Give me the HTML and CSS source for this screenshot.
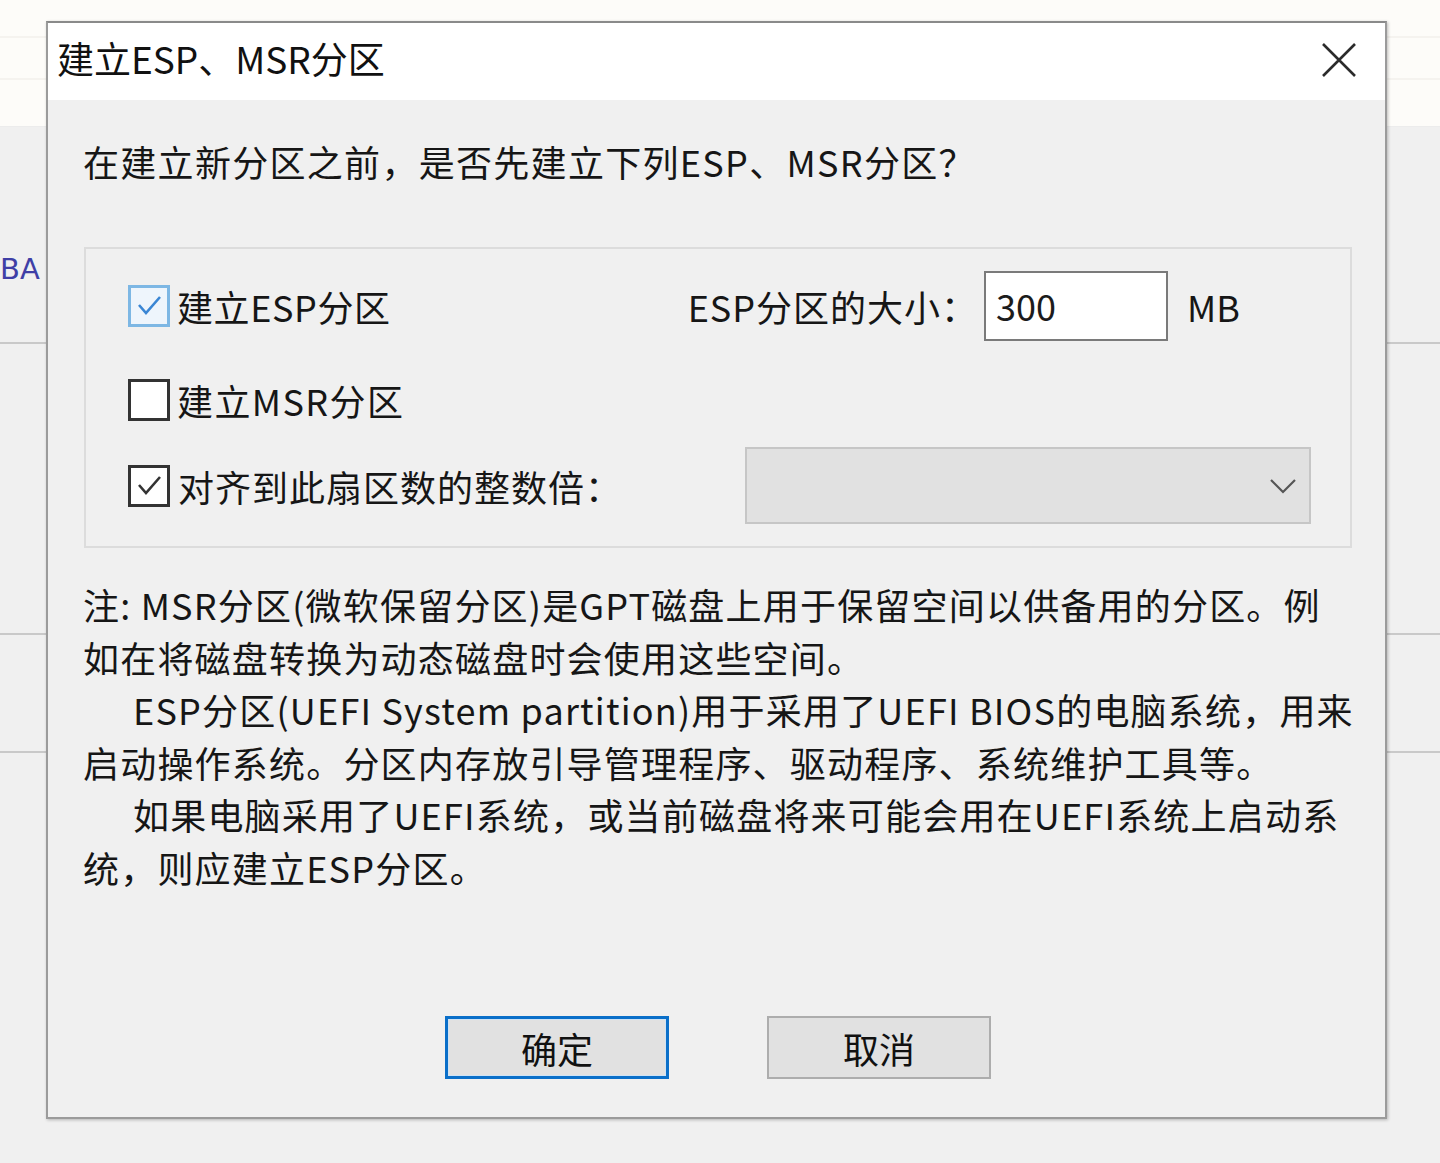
FILE: index.html
```html
<!DOCTYPE html>
<html lang="zh-CN">
<head>
<meta charset="utf-8">
<title>建立ESP、MSR分区</title>
<link rel="stylesheet" href="styles.css">
</head>
<body>
<div class="desktop">
  <div class="top-band"></div>
  <div class="bg-label">BA</div>

  <div class="dialog">
    <div class="titlebar">
      <span class="title">建立ESP、MSR分区</span>
      <span class="close">
        <svg width="36" height="36" viewBox="0 0 36 36"><path d="M2 2 L34 34 M34 2 L2 34" stroke="#2b2b2b" stroke-width="2.6" fill="none"/></svg>
      </span>
    </div>
    <div class="content">
      <p class="prompt">在建立新分区之前，是否先建立下列ESP、MSR分区？</p>

      <div class="group">
        <div class="row row1">
          <label class="check">
            <span class="box box-focus">
              <svg width="30" height="30" viewBox="0 0 30 30"><path d="M5 14 L12 22 L26 6" stroke="#3a86d4" stroke-width="2.6" fill="none"/></svg>
            </span>
            <span class="lbl">建立ESP分区</span>
          </label>
          <div class="size">
            <span class="size-lbl">ESP分区的大小：</span>
            <span class="input">300</span>
            <span class="unit">MB</span>
          </div>
        </div>
        <div class="row row2">
          <label class="check">
            <span class="box"></span>
            <span class="lbl lbl2">建立MSR分区</span>
          </label>
        </div>
        <div class="row row3">
          <label class="check">
            <span class="box">
              <svg width="30" height="30" viewBox="0 0 30 30"><path d="M5 14 L12 22 L26 6" stroke="#333" stroke-width="2.6" fill="none"/></svg>
            </span>
            <span class="lbl lbl3">对齐到此扇区数的整数倍：</span>
          </label>
          <div class="select">
            <svg width="28" height="16" viewBox="0 0 28 16"><path d="M2 2 L14 14 L26 2" stroke="#555" stroke-width="2.2" fill="none"/></svg>
          </div>
        </div>
      </div>

      <div class="note">
        <p>注: MSR分区(微软保留分区)是GPT磁盘上用于保留空间以供备用的分区。例<br>如在将磁盘转换为动态磁盘时会使用这些空间。</p>
        <p class="ind">ESP分区(UEFI System partition)用于采用了UEFI BIOS的电脑系统，用来<br>启动操作系统。分区内存放引导管理程序、驱动程序、系统维护工具等。</p>
        <p class="ind">如果电脑采用了UEFI系统，或当前磁盘将来可能会用在UEFI系统上启动系<br>统，则应建立ESP分区。</p>
      </div>

      <div class="buttons">
        <span class="btn btn-default">确定</span>
        <span class="btn">取消</span>
      </div>
    </div>
  </div>
</div>
</body>
</html>
```

FILE: styles.css
```css
* { box-sizing: border-box; }
html, body { margin: 0; padding: 0; }
body {
  width: 1440px;
  height: 1163px;
  overflow: hidden;
  font-family: "Noto Sans CJK SC", "Noto Sans", sans-serif;
  color: #161616;
}
.desktop {
  position: relative;
  width: 1440px;
  height: 1163px;
  background-color: #f0f0f0;
  background-image:
    linear-gradient(#c9c9c9, #c9c9c9),
    linear-gradient(#c9c9c9, #c9c9c9),
    linear-gradient(#c9c9c9, #c9c9c9);
  background-size: 100% 2px, 100% 2px, 100% 2px;
  background-position: 0 342px, 0 633px, 0 751px;
  background-repeat: no-repeat;
}
.top-band {
  height: 127px;
  background-color: #fdfcf9;
  background-image:
    repeating-linear-gradient(to bottom, transparent 0, transparent 36px, #f5f3ef 36px, #f5f3ef 38px, transparent 38px, transparent 78px, #f5f3ef 78px, #f5f3ef 80px, transparent 80px, transparent 127px);
  border-bottom: 1px solid #ececec;
}
.bg-label {
  position: absolute;
  left: 0;
  top: 252px;
  font-family: "DejaVu Sans", sans-serif;
  font-size: 29px;
  color: #3f3fa6;
}

.dialog {
  position: absolute;
  left: 46px;
  top: 21px;
  width: 1341px;
  height: 1098px;
  border: 2px solid #9b9b9b;
  border-top-color: #8a8a8a;
  background: #f0f0f0;
  box-shadow: 1px 1px 3px rgba(0,0,0,0.25);
  display: flex;
  flex-direction: column;
}
.titlebar {
  height: 77px;
  background: #ffffff;
  display: flex;
  align-items: center;
  justify-content: space-between;
  padding: 0 28px 0 9px;
}
.title {
  font-size: 37px;
  letter-spacing: 0;
  color: #111;
  margin-top: -8px;
}
.close { display: flex; margin-top: -4px; }

.content {
  flex: 1;
  display: flex;
  flex-direction: column;
  padding: 0 32px 38px 35px;
}
.prompt {
  margin: 35px 0 0;
  font-size: 36px;
  line-height: 52px;
  letter-spacing: 1.3px;
  white-space: nowrap;
}
.group {
  margin: 60px 0 0 1px;
  width: 1268px;
  height: 301px;
  border: 2px solid #dcdcdc;
  padding: 22px 39px 0 42px;
  display: flex;
  flex-direction: column;
}
.row {
  display: flex;
  align-items: center;
  justify-content: space-between;
}
.row1 { height: 70px; }
.row2 { height: 40px; margin-top: 39px; }
.row3 { height: 77px; margin-top: 27px; }
.check {
  display: flex;
  align-items: center;
  gap: 7px;
}
.box {
  width: 42px;
  height: 42px;
  border: 3px solid #333;
  background: #fff;
  display: flex;
  align-items: center;
  justify-content: center;
}
.box-focus {
  border-color: #7db7e4;
  background: #eef5fc;
}
.lbl {
  font-size: 36px;
  letter-spacing: 0.6px;
  white-space: nowrap;
}
.lbl2 { letter-spacing: 1.4px; }
.lbl3 { margin-left: 1px; letter-spacing: 1px; }
.size {
  display: flex;
  align-items: center;
  margin-right: 71px;
}
.size-lbl {
  font-size: 36px;
  letter-spacing: 1px;
  white-space: nowrap;
}
.input {
  width: 184px;
  height: 70px;
  margin-left: 6px;
  background: #fff;
  border: 2px solid #7a7a7a;
  font-size: 36px;
  line-height: 64px;
  padding-left: 10px;
  color: #1c1c1c;
}
.unit {
  margin-left: 19px;
  font-size: 36px;
}
.select {
  width: 566px;
  height: 77px;
  background: #e1e1e1;
  border: 2px solid #c6c6c6;
  display: flex;
  align-items: center;
  justify-content: flex-end;
  padding-right: 12px;
}

.note {
  margin-top: 30px;
  font-size: 36px;
  line-height: 52.6px;
  letter-spacing: 1.2px;
  white-space: nowrap;
}
.note p { margin: 0; }
.note .ind { text-indent: 50px; }

.buttons {
  margin-top: auto;
  display: flex;
  justify-content: center;
  gap: 98px;
}
.btn {
  width: 224px;
  height: 63px;
  background: #e1e1e1;
  border: 2px solid #adadad;
  display: flex;
  align-items: center;
  justify-content: center;
  font-size: 36px;
  color: #111;
}
.btn-default {
  border: 3px solid #0a6fc9;
  box-shadow: inset 0 0 0 1px #cfe3f5;
}
```
